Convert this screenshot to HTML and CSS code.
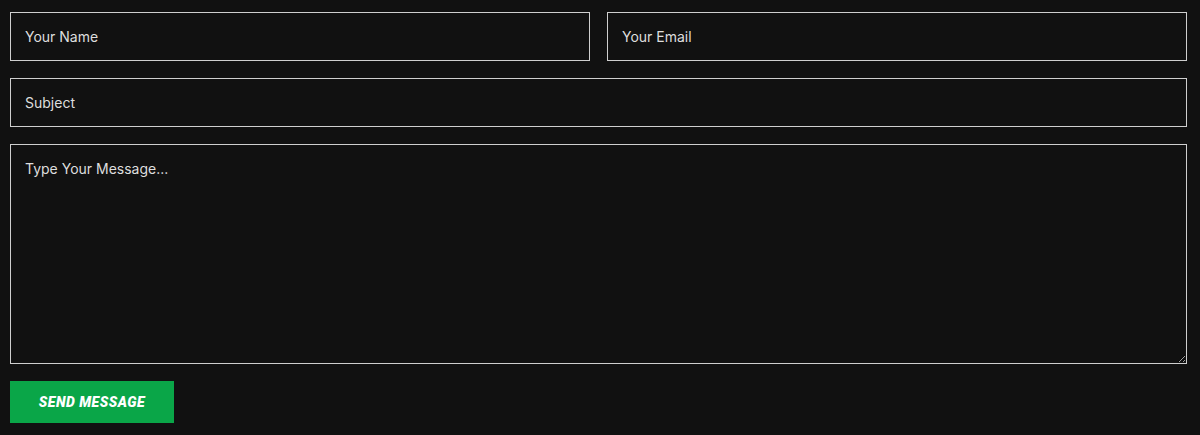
FILE: index.html
```html
<!DOCTYPE html>
<html lang="en">
<head>
  <meta charset="UTF-8">
  <meta name="viewport" content="width=device-width, initial-scale=1.0">
  <title>Contact</title>
  <link rel="stylesheet" href="styles.css">
</head>
<body>
  <form class="contact-form">
    <div class="row two">
      <input type="text" class="field" placeholder="Your Name">
      <input type="email" class="field" placeholder="Your Email">
    </div>
    <input type="text" class="field" placeholder="Subject">
    <textarea class="field message" placeholder="Type Your Message..."></textarea>
    <div>
      <button type="button" class="send-btn">Send Message</button>
    </div>
  </form>
</body>
</html>
```

FILE: styles.css
```css
body {
  margin: 0;
  background: #111111;
  font-family: Inter, "Noto Sans", sans-serif;
  color: #e0e0e0;
}
.contact-form {
  display: flex;
  flex-direction: column;
  gap: 17px;
  padding: 12px 13px 12px 10px;
}
.row.two {
  display: grid;
  grid-template-columns: 1fr 1fr;
  gap: 17px;
}
.field {
  box-sizing: border-box;
  width: 100%;
  height: 49px;
  margin: 0;
  padding: 0 14px;
  background: #111111;
  border: 1px solid #cfcfcf;
  border-radius: 0;
  color: #e0e0e0;
  font-family: Inter, "Noto Sans", sans-serif;
  font-size: 14px;
  outline: none;
}
.field::placeholder {
  color: #dedede;
  opacity: 1;
}
.message {
  height: 220px;
  padding: 15px 14px;
  resize: vertical;
  display: block;
}
.send-btn {
  background: #0aa648;
  color: #ffffff;
  border: none;
  height: 42px;
  width: 164px;
  padding: 0;
  font-family: Roboto, "Liberation Sans", sans-serif;
  font-size: 14px;
  font-weight: 900;
  font-style: italic;
  text-transform: uppercase;
  letter-spacing: 0.5px;
  cursor: pointer;
}
```
